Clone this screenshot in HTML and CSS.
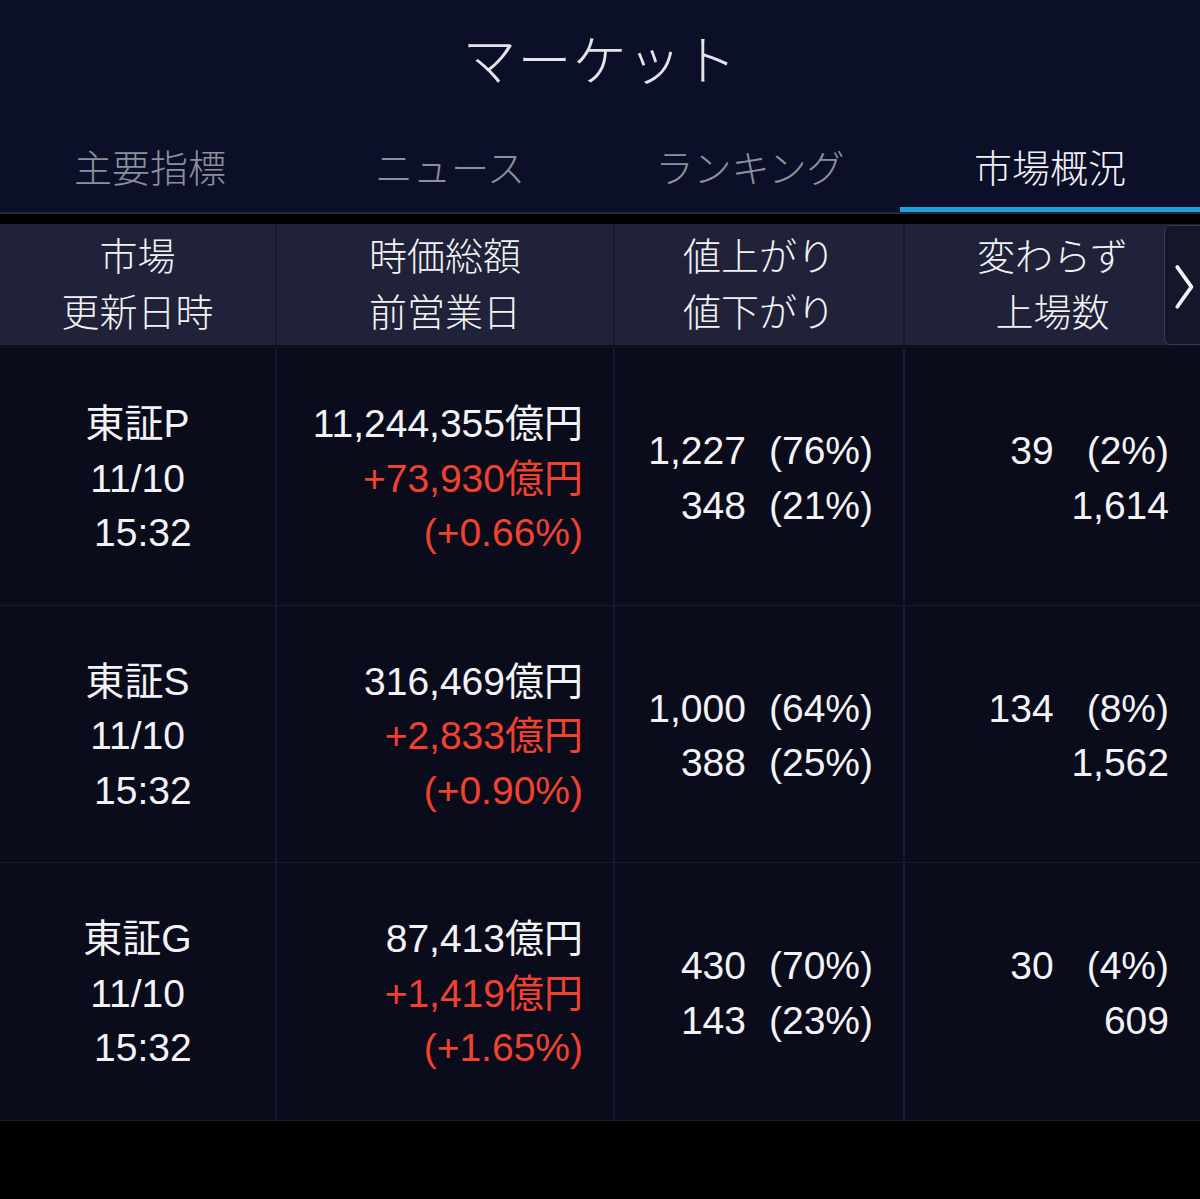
FILE: index.html
```html
<!DOCTYPE html>
<html lang="ja">
<head>
<meta charset="utf-8">
<title>マーケット</title>
<link rel="stylesheet" href="styles.css">
</head>
<body>
<div class="screen">
  <header class="topbar">
    <h1 class="title">マーケット</h1>
    <nav class="tabs">
      <div class="tab">主要指標</div>
      <div class="tab">ニュース</div>
      <div class="tab">ランキング</div>
      <div class="tab active">市場概況</div>
    </nav>
  </header>

  <div class="table">
    <div class="thead">
      <div class="th">市場<br>更新日時</div>
      <div class="th">時価総額<br>前営業日</div>
      <div class="th">値上がり<br>値下がり</div>
      <div class="th th-last">変わらず<br>上場数
        <button class="more" type="button" aria-label="次へ">
          <svg width="36" height="121" viewBox="0 0 36 121"><path d="M13 41 L28 62 L13 83" fill="none" stroke="#f4f4f6" stroke-width="4" stroke-linecap="round" stroke-linejoin="round"/></svg>
        </button>
      </div>
    </div>

    <div class="row">
      <div class="cell c-market"><span>東証P</span><span>11/10</span><span>&nbsp;15:32</span></div>
      <div class="cell c-cap"><span>11,244,355億円</span><span class="up">+73,930億円</span><span class="up">(+0.66%)</span></div>
      <div class="cell c-adv"><div class="pair"><span>1,227</span><span>(76%)</span><span>348</span><span>(21%)</span></div></div>
      <div class="cell c-unch"><div class="pair wide"><span>39</span><span>(2%)</span><span class="full">1,614</span></div></div>
    </div>

    <div class="row">
      <div class="cell c-market"><span>東証S</span><span>11/10</span><span>&nbsp;15:32</span></div>
      <div class="cell c-cap"><span>316,469億円</span><span class="up">+2,833億円</span><span class="up">(+0.90%)</span></div>
      <div class="cell c-adv"><div class="pair"><span>1,000</span><span>(64%)</span><span>388</span><span>(25%)</span></div></div>
      <div class="cell c-unch"><div class="pair wide"><span>134</span><span>(8%)</span><span class="full">1,562</span></div></div>
    </div>

    <div class="row">
      <div class="cell c-market"><span>東証G</span><span>11/10</span><span>&nbsp;15:32</span></div>
      <div class="cell c-cap"><span>87,413億円</span><span class="up">+1,419億円</span><span class="up">(+1.65%)</span></div>
      <div class="cell c-adv"><div class="pair"><span>430</span><span>(70%)</span><span>143</span><span>(23%)</span></div></div>
      <div class="cell c-unch"><div class="pair wide"><span>30</span><span>(4%)</span><span class="full">609</span></div></div>
    </div>
  </div>
</div>
</body>
</html>
```

FILE: styles.css
```css
* { box-sizing: border-box; }

html, body {
  margin: 0;
  padding: 0;
  background: #000;
}

body {
  font-family: "Liberation Sans", "Noto Sans CJK JP", sans-serif;
  color: #f3f3f5;
  width: 1200px;
  height: 1199px;
  overflow: hidden;
}

.topbar {
  background: #0c0f28;
  border-bottom: 2px solid #24273b;
}

.title {
  margin: 0;
  height: 122px;
  padding-bottom: 7px;
  display: flex;
  align-items: center;
  justify-content: center;
  font-size: 54px;
  font-weight: 300;
  color: #e4e4ea;
  letter-spacing: 1px;
}

.tabs {
  display: grid;
  grid-template-columns: repeat(4, 1fr);
  height: 90px;
}

.tab {
  display: flex;
  align-items: center;
  justify-content: center;
  padding-top: 2px;
  font-size: 38px;
  font-weight: 300;
  color: #8d8f9c;
  border-bottom: 5px solid transparent;
}

.tab.active {
  color: #f1f1f4;
  border-bottom-color: #1f9ee0;
}

.table {
  margin-top: 10px;
}

.thead {
  display: grid;
  grid-template-columns: 277px 338px 290px 295px;
  height: 124px;
  background: #1f2239;
  border-bottom: 3px solid #0d0f1c;
}

.th {
  display: flex;
  align-items: center;
  justify-content: center;
  text-align: center;
  font-size: 38px;
  font-weight: 300;
  line-height: 56px;
  border-right: 2px solid #171a2e;
}

.th-last {
  border-right: none;
  position: relative;
}

.more {
  position: absolute;
  top: 1px;
  right: -8px;
  width: 44px;
  height: 120px;
  padding: 0 8px 0 0;
  margin: 0;
  background: #14172a;
  border: 1.5px solid #3a3d52;
  border-radius: 7px;
  display: flex;
  align-items: center;
  justify-content: flex-start;
}

.more svg { display: block; }

.row {
  display: grid;
  grid-template-columns: 277px 338px 290px 295px;
  height: 257.5px;
  background: #0a0c1b;
  border-bottom: 1px solid #191c30;
}

.cell {
  display: flex;
  flex-direction: column;
  justify-content: center;
  font-size: 39px;
  line-height: 54.5px;
  border-right: 2px solid #171a2e;
  padding-top: 5px;
}

.cell:last-child { border-right: none; }

.c-market {
  align-items: center;
}

.c-cap {
  align-items: flex-end;
  padding-right: 30px;
}

.c-adv {
  align-items: flex-end;
  padding-right: 30px;
}

.c-unch {
  align-items: flex-end;
  padding-right: 31px;
}

.up { color: #f2412f; }

.pair {
  display: grid;
  grid-template-columns: auto auto;
  column-gap: 23px;
  justify-items: end;
}

.pair.wide { column-gap: 33px; }

.pair .full {
  grid-column: 1 / span 2;
  justify-self: end;
}
```
